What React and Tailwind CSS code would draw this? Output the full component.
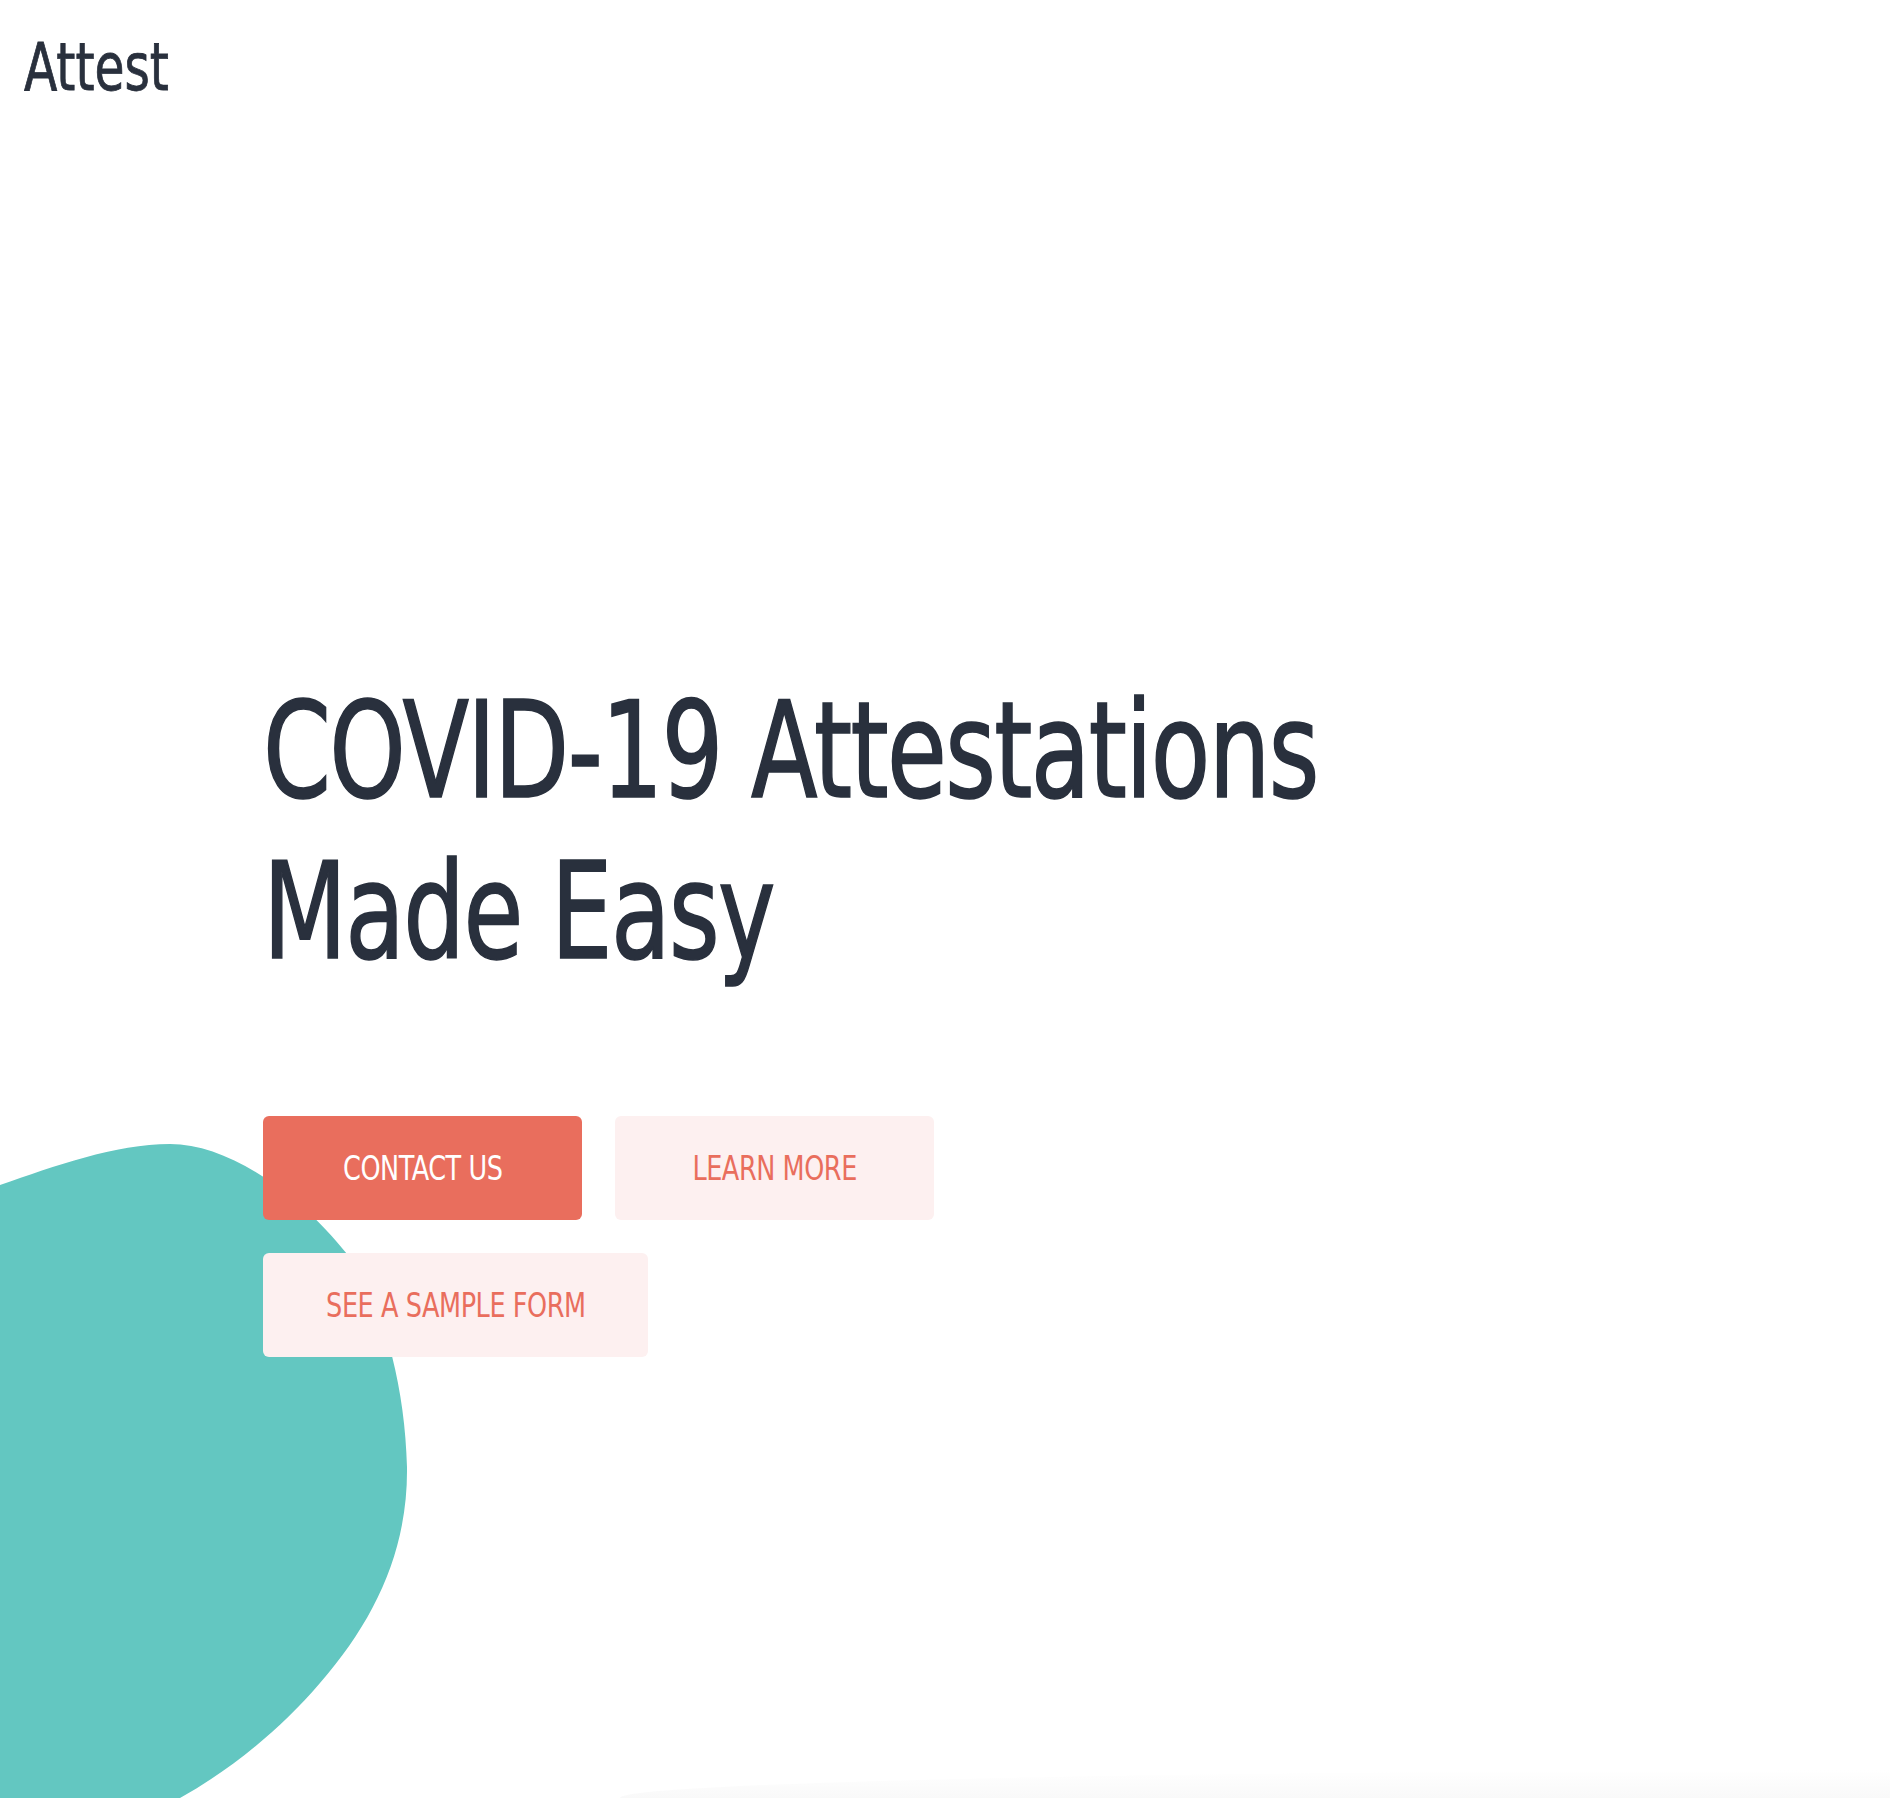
// App.jsx
import React from "react";

const fontStack = {
    fontFamily: '"DejaVu Sans Condensed", "Liberation Sans Narrow", "Liberation Sans", sans-serif',
};

// Teal decorative blob in the lower-left corner
const Blob = () => (
    <svg
        className="absolute left-0 top-[1100px] pointer-events-none"
        width="420"
        height="698"
        viewBox="0 0 420 698"
        fill="none"
    >
        <path
            d="M0 85 C55 66 115 44 170 44 C230 44 300 95 347 154 C380 195 405 280 407 367 C408 450 375 520 320 583 C280 630 230 670 180 698 L180 760 L0 760 Z"
            fill="#63c7c1"
        />
    </svg>
);

const Button = ({ primary, wide, children }) => (
    <a
        href="#"
        className={
            (wide ? "w-[385px] " : "w-[319px] ") +
            (primary ? "bg-[#e96e5d] text-white " : "bg-[#fdf0f0] text-[#e96e5d] ") +
            "h-[104px] flex items-center justify-center rounded-[6px] text-[33px] leading-none whitespace-nowrap"
        }
    >
        <span className="inline-block scale-x-[0.86] tracking-[-0.5px]">{children}</span>
    </a>
);

const App = () => {
    return (
        <div className="relative min-h-[1798px] overflow-hidden bg-white text-[#29303d]" style={fontStack}>
            <Blob />

            {/* Header */}
            <header className="relative z-10 px-[24px] pt-[35px]">
                <span className="inline-block origin-left scale-x-[0.82] text-[66px] leading-none [-webkit-text-stroke:0.8px_#29303d]">
                    Attest
                </span>
            </header>

            {/* Hero */}
            <main className="relative z-10 pl-[263px] pt-[570px]">
                <h1 className="origin-left scale-x-[0.807] text-[134px] leading-[161px] tracking-[-2px] whitespace-nowrap [-webkit-text-stroke:1.6px_#29303d]">
                    COVID-19 Attestations
                    <br />
                    Made Easy
                </h1>

                <div className="mt-[123px] flex flex-wrap gap-[33px] w-[720px]">
                    <Button primary>CONTACT US</Button>
                    <Button>LEARN MORE</Button>
                    <Button wide>SEE A SAMPLE FORM</Button>
                </div>
            </main>

            {/* faint shadow of the next section */}
            <div className="absolute bottom-0 left-[620px] right-0 h-[28px] rounded-tl-[100%] bg-gradient-to-b from-white to-[#f9f9f9]"></div>
        </div>
    );
};

export default App;
